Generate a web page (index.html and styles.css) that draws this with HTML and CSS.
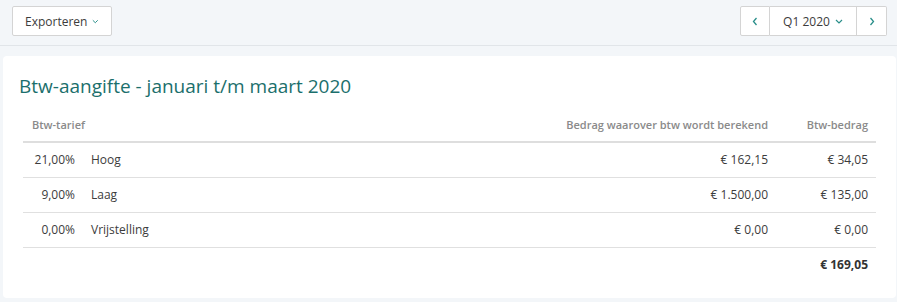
FILE: index.html
```html
<!DOCTYPE html>
<html lang="nl">
<head>
<meta charset="utf-8">
<title>Btw-aangifte</title>
<link rel="stylesheet" href="styles.css">
</head>
<body>
<div class="toolbar">
  <button class="btn export">Exporteren <svg class="chev" width="8" height="5" viewBox="0 0 8 5"><path d="M1 1l3 3 3-3" fill="none" stroke="currentColor" stroke-width="1.2"/></svg></button>
  <div class="period">
    <button class="btn seg nav"><svg width="6" height="9" viewBox="0 0 6 9"><path d="M4.5 1L1.5 4.5 4.5 8" fill="none" stroke="currentColor" stroke-width="1.3"/></svg></button>
    <button class="btn seg mid">Q1 2020 <svg class="chev" width="8" height="5" viewBox="0 0 8 5"><path d="M1 1l3 3 3-3" fill="none" stroke="currentColor" stroke-width="1.2"/></svg></button>
    <button class="btn seg nav"><svg width="6" height="9" viewBox="0 0 6 9"><path d="M1.5 1L4.5 4.5 1.5 8" fill="none" stroke="currentColor" stroke-width="1.3"/></svg></button>
  </div>
</div>
<main class="card">
  <h1 class="title">Btw-aangifte - januari t/m maart 2020</h1>
  <table class="vat">
    <colgroup>
      <col class="c-rate">
      <col>
      <col>
      <col class="c-last">
    </colgroup>
    <thead>
      <tr>
        <th class="rate">Btw-tarief</th>
        <th class="name"></th>
        <th class="num">Bedrag waarover btw wordt berekend</th>
        <th class="num">Btw-bedrag</th>
      </tr>
    </thead>
    <tbody>
      <tr><td class="rate">21,00%</td><td class="name">Hoog</td><td class="num">€ 162,15</td><td class="num">€ 34,05</td></tr>
      <tr><td class="rate">9,00%</td><td class="name">Laag</td><td class="num">€ 1.500,00</td><td class="num">€ 135,00</td></tr>
      <tr><td class="rate">0,00%</td><td class="name">Vrijstelling</td><td class="num">€ 0,00</td><td class="num">€ 0,00</td></tr>
    </tbody>
    <tfoot>
      <tr><td></td><td></td><td></td><td class="num total">€ 169,05</td></tr>
    </tfoot>
  </table>
</main>
</body>
</html>
```
FILE: styles.css
```css
* { box-sizing: border-box; }
html, body { margin: 0; }
body {
  background: #f3f6f9;
  font-family: "Open Sans", "DejaVu Sans", sans-serif;
  color: #3c3c3c;
  font-size: 12px;
  height: 302px;
  overflow: hidden;
}
.toolbar {
  height: 46px;
  display: flex;
  justify-content: space-between;
  align-items: flex-start;
  padding: 6px 10px 0 12px;
  border-bottom: 1px solid #e1e5e9;
}
.btn {
  font-family: inherit;
  font-size: 12px;
  color: #3c3c3c;
  background: #fff;
  border: 1px solid #d4d4d4;
  border-radius: 2px;
  height: 30px;
  display: inline-flex;
  align-items: center;
  justify-content: center;
  gap: 5px;
  padding: 0 12px;
  cursor: pointer;
}
.chev { color: #2a8f8a; margin-top: 1px; }
.export { width: 100px; }
.period { display: flex; }
.seg { border-radius: 0; }
.seg + .seg { border-left: none; }
.period .seg:first-child { border-radius: 2px 0 0 2px; }
.period .seg:last-child { border-radius: 0 2px 2px 0; }
.nav { width: 30px; padding: 0; color: #2a8f8a; }
.mid { width: 87px; padding: 0; }
.card {
  margin: 10px 1px 0 3px;
  background: #fff;
  border-radius: 4px;
  height: 242px;
  padding: 16px 20px 0 20px;
}
.title {
  margin: 0 0 0 -4px;
  font-size: 19px;
  font-weight: 400;
  color: #1b6f6c;
  line-height: 28px;
}
.vat {
  width: 100%;
  margin: 14px 0 0 0;
  border-collapse: collapse;
  table-layout: fixed;
}
.c-rate { width: 60px; }
.c-last { width: 100px; }
.vat th {
  font-size: 11px;
  font-weight: 600;
  color: #8a8a8a;
  text-align: left;
  white-space: nowrap;
  overflow: visible;
  padding: 0 8px 9px 9px;
  height: 28px;
  vertical-align: bottom;
  border-bottom: 2px solid #dedede;
}
.vat td {
  height: 35px;
  padding: 0 8px;
  border-bottom: 1px solid #e0e0e0;
  vertical-align: middle;
  white-space: nowrap;
}
.vat tfoot td { border-bottom: none; }
.vat .rate { text-align: right; }
.vat th.rate { text-align: left; }
.vat .num { text-align: right; }
.total { font-weight: 700; color: #333; }
```
